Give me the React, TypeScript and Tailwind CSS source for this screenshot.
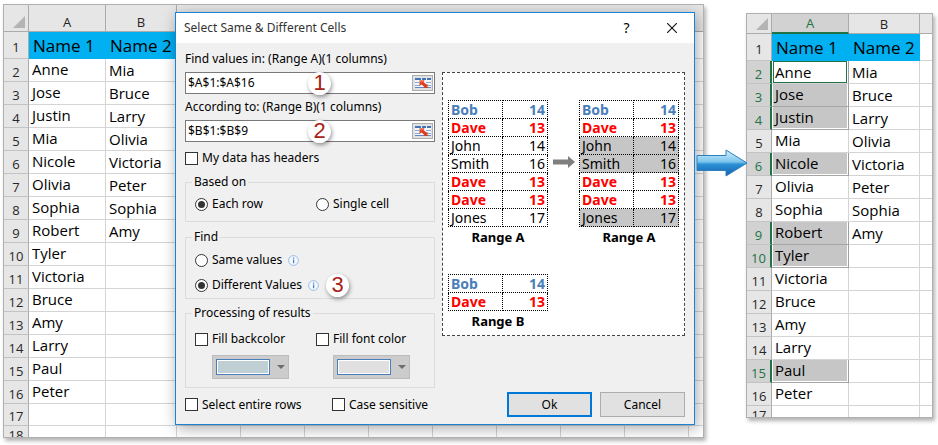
import { useState } from "react";
import type { ReactNode } from "react";
import clsx from "clsx";

const columnA = [
  "Anne", "Jose", "Justin", "Mia", "Nicole", "Olivia", "Sophia", "Robert",
  "Tyler", "Victoria", "Bruce", "Amy", "Larry", "Paul", "Peter",
];
const columnB = ["Mia", "Bruce", "Larry", "Olivia", "Victoria", "Peter", "Sophia", "Amy"];

// first and last row of each selected block in column A
const selection = [
  [2, 4],
  [6, 6],
  [9, 10],
  [15, 15],
];

const rangeA = [
  ["Bob", "14"],
  ["Dave", "13"],
  ["John", "14"],
  ["Smith", "16"],
  ["Dave", "13"],
  ["Dave", "13"],
  ["Jones", "17"],
];

function SheetTable({
  lastRow,
  extra,
  selected = [],
  className,
  headClass,
}: {
  lastRow: number;
  extra: number;
  selected?: number[][];
  className: string;
  headClass: string;
}) {
  const rows = Array.from({ length: lastRow }, (_, i) => i + 1);
  const isSelected = (row: number) => selected.some(([a, b]) => row >= a && row <= b);
  const isBlockEnd = (row: number) => selected.some(([, b]) => row === b);
  const blanks = Array.from({ length: extra });

  return (
    <table className={clsx("table-fixed border-separate border-spacing-0 text-left", className)}>
      <colgroup>
        <col className="w-[25px]" />
        <col className="w-[77px]" />
        <col className="w-[71px]" />
        {blanks.map((_, i) => (
          <col key={i} className="w-[64px]" />
        ))}
      </colgroup>
      <thead>
        <tr className={headClass}>
          <td className="border-r border-b border-[#ababab] bg-[#e6e6e6] p-0 align-bottom">
            <svg viewBox="0 0 12 12" className="mb-[3px] ml-[9px] size-3">
              <path d="M12 0V12H0z" fill="#b4b4b4" />
            </svg>
          </td>
          <th
            scope="col"
            className={clsx(
              "border-r border-r-[#ababab] p-0 text-center align-bottom text-[13px] leading-[18px] font-normal",
              selected.length > 0
                ? "border-b-2 border-b-[#217346] bg-[#d2d2d2] text-[#217346]"
                : "border-b border-b-[#ababab] bg-[#e6e6e6] text-[#262626]",
            )}
          >
            A
          </th>
          <th
            scope="col"
            className="border-r border-b border-[#ababab] bg-[#e6e6e6] p-0 text-center align-bottom text-[13px] leading-[18px] font-normal text-[#262626]"
          >
            B
          </th>
          {blanks.map((_, i) => (
            <td key={i} className="border-b border-[#ababab] bg-[#e6e6e6]" />
          ))}
        </tr>
      </thead>
      <tbody>
        {rows.map((row) => {
          const last = row === lastRow;
          const on = isSelected(row);
          const height = row === 1 ? "h-[27px]" : last ? "h-[11px]" : row === 17 ? "h-[22px]" : "h-[23px]";
          return (
            <tr key={row} className={height}>
              <th
                scope="row"
                className={clsx(
                  "p-0 text-center text-[13px] font-normal",
                  on
                    ? "border-r-2 border-r-[#217346] bg-[#d2d2d2] text-[#217346]"
                    : "border-r border-r-[#ababab] bg-[#e6e6e6] text-[#262626]",
                  !last && "border-b border-b-[#c3c3c3]",
                )}
              >
                <div className={clsx("overflow-hidden", last ? "h-[11px] leading-[18px]" : "pt-[3px] leading-4")}>
                  {row}
                </div>
              </th>
              {row === 1 ? (
                <>
                  <td className="bg-[#00b0f0] p-0 pl-1 text-[17px] leading-6 whitespace-nowrap">Name 1</td>
                  <td className="bg-[#00b0f0] p-0 pl-1 text-[17px] leading-6 whitespace-nowrap">Name 2</td>
                </>
              ) : (
                <>
                  <td
                    className={clsx(
                      "border-r p-0 text-[15px] leading-5",
                      !last && "border-b",
                      on ? "border-r-[#a0a0a0]" : "border-r-[#d4d4d4]",
                      isBlockEnd(row) || (on && row > 2) ? "border-b-[#a6a6a6]" : "border-b-[#d4d4d4]",
                    )}
                  >
                    <div
                      className={clsx(
                        on && row === 2 && "mx-px border border-[#217346] pl-px leading-5",
                        on && row !== 2 && "ml-px border-r border-white bg-[#c6c6c6] pl-[2px]",
                        isBlockEnd(row) && "border-b",
                        !on && "pl-[3px]",
                        !last && row !== 17 && "h-[22px]",
                      )}
                    >
                      {columnA[row - 2]}
                    </div>
                  </td>
                  <td
                    className={clsx(
                      "border-r border-[#d4d4d4] p-0 pl-[3px] text-[15px] leading-5",
                      !last && "border-b",
                    )}
                  >
                    {columnB[row - 2]}
                  </td>
                </>
              )}
              {blanks.map((_, i) => (
                <td key={i} className={clsx("border-r border-[#d4d4d4]", !last && "border-b")} />
              ))}
            </tr>
          );
        })}
      </tbody>
    </table>
  );
}

function Badge({ children, className }: { children: ReactNode; className?: string }) {
  return (
    <span
      className={clsx(
        "flex size-[23px] items-center justify-center rounded-full bg-white font-['Liberation_Sans',sans-serif] text-[22px] leading-none text-[#a82314] shadow-[1px_2px_4px_rgba(0,0,0,0.4)]",
        className,
      )}
    >
      {children}
    </span>
  );
}

function RangeField({
  id,
  label,
  initial,
  step,
}: {
  id: string;
  label: string;
  initial: string;
  step: string;
}) {
  const [value, setValue] = useState(initial);
  return (
    <div className="flex flex-col gap-[5px]">
      <label htmlFor={id}>{label}</label>
      <div className="relative flex h-[22px] items-center border border-[#7a7a7a] bg-white pr-px">
        <input
          id={id}
          value={value}
          onChange={(e) => setValue(e.target.value)}
          className="min-w-0 flex-1 pl-[2px] outline-none"
        />
        <button
          type="button"
          aria-label="Pick range"
          className="flex h-4 w-[21px] items-center justify-center border border-[#adadad] bg-[#e1e1e1]"
        >
          <svg viewBox="0 0 16 12" className="h-3 w-4">
            <path d="M0 1h16v10H0z" fill="#f3f7fc" />
            <path d="M0 1h6v2H0zM7 1h4v2H7zM12 1h4v2h-4z" fill="#4573b8" />
            <path d="M0 5h4v1H0zM11 5h5v1h-5zM0 8h5v1H0zM12 8h4v1h-4z" fill="#86a8d6" />
            <path d="M0 10h16v1H0z" fill="#5f87c2" />
            <path d="M4.500 3.500h5l-1 1.500 3 2.500 1-.5v4h-4l.7-1.200-2.700-2.300-2 1.500z" fill="#dc3f1f" />
            <path d="M4.500 3.500h5L6.500 6z" fill="#ee6a48" />
          </svg>
        </button>
        <Badge className="absolute left-[122px]">{step}</Badge>
      </div>
    </div>
  );
}

function CheckOption({ label }: { label: string }) {
  return (
    <label className="flex items-center gap-1">
      <input type="checkbox" className="size-[13px] appearance-none border border-[#333] bg-white checked:bg-[#333]" />
      {label}
    </label>
  );
}

function RadioOption({ name, label, checked }: { name: string; label: string; checked?: boolean }) {
  return (
    <label className="flex items-center gap-1">
      <input
        type="radio"
        name={name}
        defaultChecked={checked}
        className="flex size-[13px] appearance-none items-center justify-center rounded-full border border-[#333] bg-white before:size-[7px] before:rounded-full checked:before:bg-[#333]"
      />
      {label}
    </label>
  );
}

function InfoIcon() {
  return (
    <svg viewBox="0 0 12 12" className="ml-[6px] size-[11px]">
      <circle cx="6" cy="6" r="5.3" fill="#f6faff" stroke="#8fb4e3" />
      <path d="M5.4 5h1.4v4H5.4zM5.4 2.8h1.4v1.3H5.4z" fill="#4a7fc9" />
    </svg>
  );
}

function ColorButton({ label, fill }: { label: string; fill: string }) {
  return (
    <button
      type="button"
      aria-label={label}
      className="ml-[17px] flex h-6 w-[77px] items-center border border-[#bcbcbc] bg-[#cccccc] pl-[3px]"
    >
      <span className={clsx("h-4 w-[54px] border border-[#4a7ebb] ring-1 ring-white ring-inset", fill)} />
      <svg viewBox="0 0 8 4" className="ml-[7px] h-1 w-2">
        <path d="M0 0h8L4 4z" fill="#6d6d6d" />
      </svg>
    </button>
  );
}

function Group({ title, className, children }: { title: string; className: string; children: ReactNode }) {
  return (
    <fieldset className={clsx("border border-[#dcdcdc] px-[9px]", className)}>
      <legend className="-ml-[3px] px-[2px]">{title}</legend>
      {children}
    </fieldset>
  );
}

function MiniTable({ rows, caption, marked }: { rows: string[][]; caption: string; marked?: boolean }) {
  return (
    <table className="w-[100px] table-fixed border-collapse text-sm leading-4">
      <caption className="caption-bottom pt-[2px] text-[13px] font-bold">{caption}</caption>
      <tbody>
        {rows.map(([name, value], i) => {
          const tone =
            name === "Bob" ? "font-bold text-[#4a7ebb]" : name === "Dave" ? "font-bold text-[#ff0000]" : "";
          const shade = marked && tone === "" ? "bg-[#c6c6c6]" : "";
          return (
            <tr key={i} className={clsx("h-[18px]", tone, shade)}>
              <td className="w-[54px] border border-dotted border-black p-0 pl-[2px]">{name}</td>
              <td className="border border-dotted border-black p-0 pr-[2px] text-right">{value}</td>
            </tr>
          );
        })}
      </tbody>
    </table>
  );
}

function Dialog() {
  return (
    <div
      role="dialog"
      aria-labelledby="dialog-title"
      className="absolute top-[7px] right-2 left-[171px] border border-[#1883d7] bg-[#f0f0f0] font-['Noto_Sans',sans-serif] text-xs leading-4 shadow-[2px_3px_14px_rgba(0,0,0,0.35)]"
    >
      <div className="flex h-[30px] items-center bg-white pl-2">
        <h1 id="dialog-title" className="flex-1 text-[#333]">
          Select Same &amp; Different Cells
        </h1>
        <button type="button" aria-label="Help" className="w-[45px] text-center text-sm">
          ?
        </button>
        <button type="button" aria-label="Close" className="flex w-[45px] justify-center">
          <svg viewBox="0 0 10 10" className="size-[10px]" stroke="#111" strokeWidth="1.1">
            <path d="M0 0l10 10M10 0L0 10" />
          </svg>
        </button>
      </div>

      <div className="flex gap-[7px] px-[9px] pt-2">
        <div className="w-[250px]">
          <div className="flex flex-col gap-[5px]">
            <RangeField id="range-a" label="Find values in: (Range A)(1 columns)" initial="$A$1:$A$16" step="1" />
            <RangeField id="range-b" label="According to: (Range B)(1 columns)" initial="$B$1:$B$9" step="2" />
          </div>
          <div className="mt-2 mb-2 flex">
            <CheckOption label="My data has headers" />
          </div>
          <Group title="Based on" className="pt-[6px] pb-[9px]">
            <div className="grid grid-cols-[121px_1fr]">
              <RadioOption name="based" label="Each row" checked />
              <RadioOption name="based" label="Single cell" />
            </div>
          </Group>
          <Group title="Find" className="mt-[7px] pt-[7px] pb-[5px]">
            <div className="flex flex-col gap-[9px]">
              <div className="flex items-center">
                <RadioOption name="find" label="Same values" />
                <InfoIcon />
              </div>
              <div className="relative flex items-center">
                <RadioOption name="find" label="Different Values" checked />
                <InfoIcon />
                <Badge className="absolute left-[131px]">3</Badge>
              </div>
            </div>
          </Group>
          <Group title="Processing of results" className="mt-[6px] pt-[10px] pb-2">
            <div className="grid grid-cols-[121px_1fr] gap-y-2">
              <CheckOption label="Fill backcolor" />
              <CheckOption label="Fill font color" />
              <ColorButton label="Backcolor" fill="bg-[#bfcfd3]" />
              <ColorButton label="Font color" fill="bg-[#e0e0e0]" />
            </div>
          </Group>
        </div>

        <div className="mt-[21px] flex-1 self-start border border-dashed border-[#444] bg-white px-[5px] pt-[27px] pb-[6px]">
          <div className="flex justify-between">
            <MiniTable rows={rangeA} caption="Range A" />
            <svg viewBox="0 0 22 12" className="mt-14 h-3 w-[22px]">
              <path d="M0 3.500h15V0l7 6-7 6V8.500H0z" fill="#7f7f7f" />
            </svg>
            <MiniTable rows={rangeA} caption="Range A" marked />
          </div>
          <div className="mt-[29px]">
            <MiniTable rows={rangeA.slice(0, 2)} caption="Range B" />
          </div>
        </div>
      </div>

      <div className="flex items-center px-[9px] pt-1 pb-[7px]">
        <div className="grid flex-1 grid-cols-[147px_1fr]">
          <CheckOption label="Select entire rows" />
          <CheckOption label="Case sensitive" />
        </div>
        <div className="flex gap-2">
          <button type="button" className="h-[25px] w-[85px] border-2 border-[#0078d7] bg-[#e1e1e1]">
            Ok
          </button>
          <button type="button" className="h-[25px] w-[85px] border border-[#adadad] bg-[#e1e1e1]">
            Cancel
          </button>
        </div>
      </div>
    </div>
  );
}

export default function App() {
  return (
    <div className="flex min-h-screen items-start gap-[42px] bg-white pt-1 pr-[5px] pl-[3px] font-['Open_Sans','Noto_Sans',sans-serif] text-black">
      <div className="relative min-w-0 flex-1 overflow-hidden border border-[#b0b0b0] shadow-[2px_3px_4px_rgba(0,0,0,0.3)]">
        <SheetTable lastRow={18} extra={9} className="w-[749px]" headClass="h-[27px]" />
        <Dialog />
      </div>

      <div className="relative mt-[9px] w-[187px]">
        <div className="overflow-hidden border border-[#b0b0b0] shadow-[2px_3px_4px_rgba(0,0,0,0.3)]">
          <SheetTable lastRow={17} extra={1} selected={selection} className="w-[237px]" headClass="h-5" />
        </div>
        <svg viewBox="0 0 52 28" className="absolute top-[136px] -left-[50px] h-7 w-[52px]">
          <defs>
            <linearGradient id="arrow-fill" x1="0" y1="0" x2="0" y2="1">
              <stop offset="0" stopColor="#d5f1fb" />
              <stop offset="0.45" stopColor="#7cc6ec" />
              <stop offset="0.55" stopColor="#2b90d4" />
              <stop offset="1" stopColor="#1560b0" />
            </linearGradient>
          </defs>
          <path d="M1 6.500H30V1L51 14 30 27V21.500H1z" fill="url(#arrow-fill)" stroke="#2f7fbf" />
        </svg>
      </div>
    </div>
  );
}
